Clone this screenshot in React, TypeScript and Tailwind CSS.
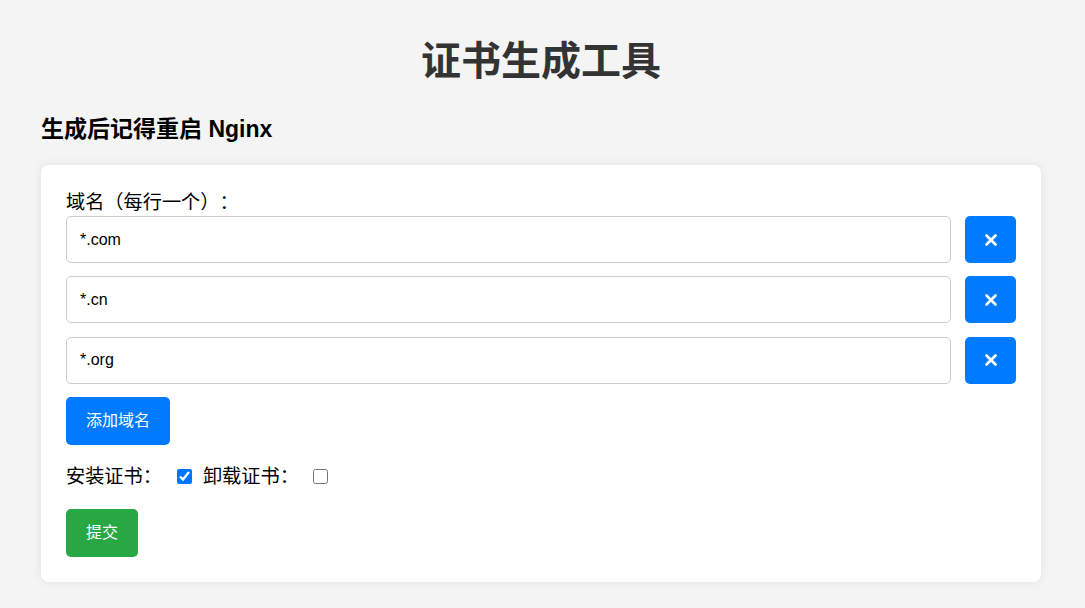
import { useState } from 'react'

const font = { fontFamily: '"Liberation Sans", "Noto Sans CJK SC", sans-serif' }

function XIcon() {
  return (
    <svg width="14" height="14" viewBox="0 0 14 14" fill="none">
      <path d="M2.5 2.5l9 9M11.5 2.5l-9 9" stroke="white" strokeWidth="2.6" strokeLinecap="round" />
    </svg>
  )
}

export default function App() {
  const [domains, setDomains] = useState(['*.com', '*.cn', '*.org'])

  return (
    <div className="min-h-screen bg-[#f4f4f4] pt-[37px] pb-[26px] [text-spacing-trim:space-all]" style={font}>
      <div className="w-[1000px] ml-[41px]">
        <h1 className="text-center text-[40px] leading-[48px] font-bold text-[#333]">证书生成工具</h1>
        <h2 className="mt-[30px] text-[23px] leading-[28px] font-bold text-black">生成后记得重启 Nginx</h2>

        <div className="mt-[22px] bg-white rounded-lg shadow-[0_0_10px_rgba(0,0,0,0.08)] p-[25px]">
          <label className="block text-[19.2px] leading-[26px] text-black">域名（每行一个）：</label>

          {domains.map((d, i) => (
            <div key={i} className="flex items-center gap-[14px] mb-[13.3px]">
              <input
                value={d}
                onChange={(e) => {
                  const next = [...domains]
                  next[i] = e.target.value
                  setDomains(next)
                }}
                className="flex-1 h-[47px] px-[13px] border border-[#ccc] rounded-[5px] text-[16px] text-black outline-none"
              />
              <button
                type="button"
                onClick={() => setDomains(domains.filter((_, j) => j !== i))}
                className="w-[51px] h-[47px] bg-[#007bff] rounded-[5px] flex items-center justify-center"
              >
                <XIcon />
              </button>
            </div>
          ))}

          <button
            type="button"
            onClick={() => setDomains([...domains, ''])}
            className="block h-[48px] px-[20px] bg-[#007bff] text-white text-[16px] rounded-[5px]"
          >
            添加域名
          </button>

          <div className="flex items-center h-[26px] mt-[19px] mb-[19px] text-[19.2px] text-black">
            <span>安装证书：</span>
            <input type="checkbox" defaultChecked className="w-[15px] h-[15px] ml-[15px] mr-[11px] accent-[#0075ff]" />
            <span>卸载证书：</span>
            <input type="checkbox" className="w-[15px] h-[15px] ml-[14px]" />
          </div>

          <button type="submit" className="block h-[48px] px-[20px] bg-[#28a745] text-white text-[16px] rounded-[5px]">
            提交
          </button>
        </div>
      </div>
    </div>
  )
}
